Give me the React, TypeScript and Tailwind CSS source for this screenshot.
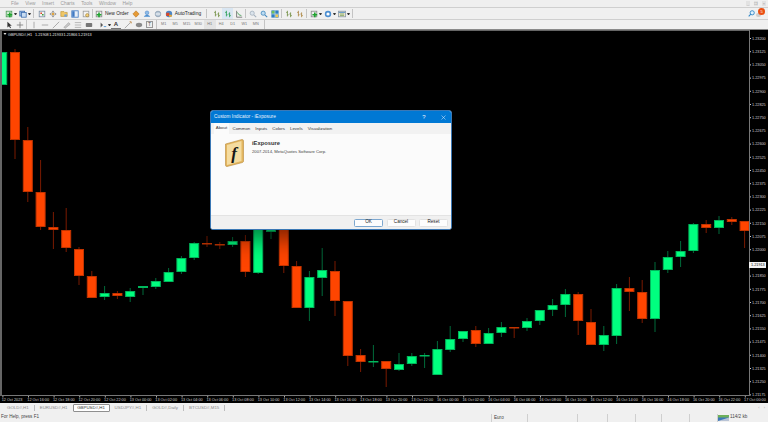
import type { ReactNode } from "react";

type Candle = [number, number, number, number];

// wick top, body top, body bottom, wick bottom per bar, in page pixels
const BARS: Candle[] = [
  [52, 52, 85, 85], [49, 52, 140, 159], [127, 140, 192, 202], [160, 192, 227, 230],
  [212, 227, 230, 249], [208, 230, 248, 252], [247, 249, 276, 285], [271, 276, 298, 298],
  [286, 293, 297, 300], [291, 293, 296, 299], [288, 291, 297, 302], [286, 286, 288, 295],
  [278, 281, 287, 289], [268, 272, 282, 282], [256, 258, 272, 274], [242, 243, 258, 260],
  [236, 243, 244, 247], [242, 244, 245, 249], [237, 241, 245, 247], [235, 241, 272, 277],
  [225, 228, 273, 274], [222, 225, 232, 239], [220, 222, 266, 273], [261, 266, 308, 308],
  [271, 277, 308, 321], [248, 270, 278, 296], [261, 271, 301, 316], [301, 301, 356, 366],
  [349, 355, 362, 372], [345, 361, 362, 367], [361, 361, 369, 387], [353, 364, 370, 371],
  [353, 356, 364, 366], [353, 355, 356, 368], [341, 349, 375, 375], [326, 339, 350, 352],
  [331, 331, 339, 342], [326, 330, 344, 347], [328, 333, 344, 344], [322, 327, 333, 337],
  [327, 327, 328, 338], [318, 321, 328, 331], [310, 310, 321, 325], [299, 305, 310, 316],
  [289, 294, 305, 317], [292, 294, 321, 335], [309, 322, 345, 345], [326, 335, 345, 351],
  [284, 288, 336, 344], [277, 288, 292, 311], [280, 292, 319, 323], [262, 270, 319, 332],
  [251, 257, 270, 273], [241, 251, 257, 267], [223, 224, 251, 253], [220, 224, 228, 233],
  [216, 220, 228, 234], [217, 219, 222, 225], [221, 221, 231, 248],
];

// bars that closed above their open
const UP = new Set([0, 8, 10, 11, 12, 13, 14, 15, 18, 20, 21, 24, 25, 29, 31, 32, 33, 34, 35, 36, 38, 39, 41, 42, 43, 44, 47, 48, 51, 52, 53, 54, 56]);

const TIMES = [
  "12 Oct 2023",
  ...["16", "18", "20", "22"].map((h) => `12 Oct ${h}:00`),
  ...["00", "02", "04", "06", "08", "10", "12", "14", "16", "18", "20", "22"].map((h) => `13 Oct ${h}:00`),
  ...["00", "02", "04", "06", "08", "10", "12", "14", "16", "18", "20", "22"].map((h) => `16 Oct ${h}:00`),
  "17 Oct 00:00",
];

function Chart() {
  const prices = Array.from({ length: 28 }, (_, i) => (1.232 - i * 0.00075).toFixed(5));
  const quotes = ["1.21908", "1.21933", "1.21866", "1.21913"];
  const font = "Liberation Sans, sans-serif";

  return (
    <svg viewBox="0 30 768 373" className="block h-[373px] w-[768px]">
      <rect x="0" y="30" width="768" height="373" fill="#000" />
      <rect x="0" y="30" width="2" height="366" fill="#666" />
      <rect x="0" y="30" width="750" height="1" fill="#666" />

      <svg x="2" y="31" width="747" height="364" viewBox="2 31 747 364">
        {BARS.map(([top, open, close, bottom], i) => {
          const x = 2.2 + 12.8 * i;
          const up = UP.has(i);
          const h = close - open;
          return (
            <g key={i}>
              <line x1={x} x2={x} y1={top} y2={bottom} stroke={up ? "#006b3a" : "#7a1a00"} strokeWidth="1" />
              <rect
                x={x - 4.5}
                y={open + 0.5}
                width="9"
                height={Math.max(h - 1, 0.5)}
                fill={up ? "#00ff7f" : "#ff4500"}
                stroke={up ? "#00b85c" : "#c23400"}
                strokeWidth="1"
              />
            </g>
          );
        })}
      </svg>

      {/* symbol line */}
      <path d="M3.500 33h3l-1.500 2z" fill="#ddd" />
      <text x="8" y="35.600" fontSize="3.800" fill="#e5e5e5" fontFamily={font}>
        GBPUSD#,H1
      </text>
      {quotes.map((q, i) => (
        <text key={q} x={35 + i * 14.3} y="35.600" fontSize="3.800" fill="#e5e5e5" fontFamily={font}>
          {q}
        </text>
      ))}

      {/* price axis, the 1.21925 tick sits under the last price tag */}
      <rect x="749" y="30" width="1" height="366" fill="#777" />
      {prices.map((p, i) =>
        i === 17 ? null : (
          <g key={p}>
            <rect x="750" y={38 + i * 13.2} width="1" height="1" fill="#ccc" />
            <text x="752" y={39.8 + i * 13.2} fontSize="3.800" fill="#cfcfcf" fontFamily={font}>
              {p}
            </text>
          </g>
        ),
      )}
      <rect x="749" y="262" width="17" height="6" fill="#f4f4f4" />
      <text x="751" y="266.400" fontSize="3.800" fill="#111" fontFamily={font}>
        1.21913
      </text>

      {/* time axis */}
      <rect x="2" y="395" width="748" height="1" fill="#777" />
      {TIMES.map((t, i) => (
        <g key={t}>
          <rect x={2.4 + i * 25.6} y="396" width="1" height="1.500" fill="#aaa" />
          <text x={1.7 + i * 25.6} y="400.600" fontSize="3.800" fill="#cfcfcf" fontFamily={font}>
            {t}
          </text>
        </g>
      ))}
    </svg>
  );
}

function Icon({ children, w = "w-[11px]" }: { children: ReactNode; w?: string }) {
  return (
    <span className={`flex h-full shrink-0 items-center justify-center ${w}`}>
      <svg viewBox="0 0 10 10" className="h-[8px] w-[8px]">
        {children}
      </svg>
    </span>
  );
}

function Sep({ tight }: { tight?: boolean }) {
  return <span className={`h-[9px] w-px shrink-0 bg-[#c4c4c4] ${tight ? "mx-px" : "mx-[2px]"}`} />;
}

function Caret() {
  return <span className="h-0 w-[3px] shrink-0 border-x-[1.500px] border-t-[2px] border-x-transparent border-t-[#333]" />;
}

const Plus = ({ x = 5, y = 6 }: { x?: number; y?: number }) => (
  <path d={`M${x - 1} ${y - 3}h2v2h2v2h-2v2h-2v-2h-2v-2h2z`} fill="#1fa32e" />
);

const Doc = ({ fill = "#dfe7ef", stroke = "#7b8da3" }: { fill?: string; stroke?: string }) => (
  <rect x="1.500" y="1.500" width="7" height="7" fill={fill} stroke={stroke} />
);

const Bars = ({ color = "#2f8f4e" }: { color?: string }) => (
  <path d="M3 1v7M1.500 3H3M3 6h1.500M7 3v6M5.500 5H7M7 7h1.500" stroke={color} fill="none" strokeWidth="1" />
);

function MainToolbar() {
  return (
    <div className="flex h-[12px] items-center border-b border-[#cfcfcf] bg-[#f0f0f0] pl-[3px]">
      <Icon><Doc fill="#cfe8cf" stroke="#4c9a57" /><Plus x={6} y={6} /></Icon>
      <Caret />
      <Icon><rect x="1" y="1.500" width="6" height="6" fill="#9fc0e6" stroke="#3f6fb0" /><rect x="3" y="3" width="6" height="6" fill="#c8dcf2" stroke="#3f6fb0" /></Icon>
      <Caret />
      <Sep />
      <Icon><Doc fill="#f2f2f2" /><path d="M3 3h2v2H3z" fill="#d64a2a" /><path d="M5 5h2v2H5z" fill="#3c9a3c" /></Icon>
      <Icon><path d="M5 .5 7 3H3zM5 9.500 3 7h4zM.5 5 3 3v4zM9.500 5 7 7V3z" fill="#8a8a8a" /><circle cx="5" cy="5" r="1.500" fill="#e2a33b" /></Icon>
      <Icon><path d="M1 2h4l1 1h3v5H1z" fill="#f1c766" stroke="#b48a2a" strokeWidth=".7" /><circle cx="7" cy="7" r="1.800" fill="#7aa6d6" /></Icon>
      <Icon><rect x="1" y="1" width="8" height="8" fill="#e6eef8" stroke="#3f79c2" /><rect x="1.500" y="1.500" width="3" height="7" fill="#3f79c2" /></Icon>
      <Icon><Doc fill="#f3f3f3" stroke="#9a9a9a" /><circle cx="6.500" cy="6.500" r="2" fill="#f7d27a" stroke="#8a6a20" strokeWidth=".6" /></Icon>
      <Sep tight />
      <Icon w="w-[10px]"><Doc fill="#ededed" stroke="#888" /><Plus x={5} y={6} /></Icon>
      <span className="ml-[1px] text-[4.900px] whitespace-nowrap text-[#222]">New Order</span>
      <span className="w-[2px]" />
      <Icon><path d="M5 1 9 5 5 9 1 5z" fill="#e59a35" stroke="#a96a18" strokeWidth=".6" /></Icon>
      <Icon><path d="M1 8.500c1-3 7-3 8 0z" fill="#4d8fd1" /><circle cx="5" cy="3.500" r="2.300" fill="#8cbce8" stroke="#3f79c2" strokeWidth=".6" /></Icon>
      <Icon><circle cx="5" cy="5" r="3.500" fill="#b9c9d8" stroke="#6c8298" strokeWidth=".7" /><path d="M2 5h6" stroke="#fff" /></Icon>
      <Icon w="w-[10px]"><circle cx="5" cy="5" r="4" fill="#4c86c6" /><path d="M1.500 3.500h4v4h-4z" fill="#d9482b" /><path d="M5 6h3.500v2.500H5z" fill="#e6a93c" /></Icon>
      <span className="ml-[1px] text-[4.900px] whitespace-nowrap text-[#222]">AutoTrading</span>
      <span className="w-[3px]" />
      <Sep />
      <span className="w-[2px]" />
      <Icon><Bars color="#6b8a3a" /></Icon>
      <span className="flex h-full w-[11px] shrink-0 items-center justify-center bg-[#d9e6f2]">
        <svg viewBox="0 0 10 10" className="h-[8px] w-[8px]"><Bars color="#1f9a4a" /></svg>
      </span>
      <Icon><path d="M2 1v8h7" stroke="#666" fill="none" /><path d="M3 3l2 3 3 1" stroke="#3a9a4a" fill="none" /></Icon>
      <Sep tight />
      <Icon><circle cx="4" cy="4" r="2.600" fill="#dbe4ec" stroke="#a3b0bc" /><path d="M6 6l3 3" stroke="#a3b0bc" strokeWidth="1.300" /></Icon>
      <Icon><circle cx="4" cy="4" r="2.600" fill="#bcdcf2" stroke="#3f86bd" /><path d="M6 6l3 3" stroke="#3f86bd" strokeWidth="1.300" /></Icon>
      <Icon><rect x=".5" y=".5" width="9" height="9" fill="#2f7fc0" /><path d="M1 1h3.500v3.500H1z" fill="#6fc25a" /><path d="M5.500 5.500H9V9H5.500z" fill="#f2c84b" /><path d="M5 .5v9M.5 5h9" stroke="#fff" strokeWidth=".6" /></Icon>
      <Sep tight />
      <Icon><Bars color="#6b8a3a" /></Icon>
      <Icon><Bars color="#a9823a" /></Icon>
      <Sep tight />
      <Icon><Doc fill="#ececec" stroke="#888" /><Plus x={6} y={6} /></Icon>
      <Caret />
      <Icon><circle cx="5" cy="5" r="4" fill="#4d8fd1" /><circle cx="5" cy="5" r="2" fill="#fff" /></Icon>
      <Caret />
      <Icon><rect x=".5" y="1.500" width="9" height="7" fill="#e9e4c9" stroke="#8c9aa8" /><path d="M1 3h8" stroke="#5d93c9" strokeWidth="1.200" /><path d="M2.500 5h5M2.500 7h5" stroke="#7ba35a" /></Icon>
      <Caret />
      <Sep />

      <div className="ml-auto flex h-full items-center gap-[3px] pr-[3px]">
        <svg viewBox="0 0 10 10" className="h-[7px] w-[7px]">
          <circle cx="6" cy="4" r="3" fill="#dff0fb" stroke="#2f87c8" strokeWidth="1.300" />
          <path d="M4 6 1 9" stroke="#2f87c8" strokeWidth="1.500" />
        </svg>
        <span className="relative h-[7px] w-[7px]">
          <span className="absolute -left-[2px] top-[3px] h-[4px] w-[5px] rounded-full bg-[#cfcfcf]" />
          <span className="absolute left-0 -top-[2px] flex h-[7px] w-[7px] items-center justify-center rounded-full bg-[#ea4f12] text-[4px] text-white">5</span>
        </span>
      </div>
    </div>
  );
}

function DrawingToolbar() {
  const periods = ["M1", "M5", "M15", "M30", "H1", "H4", "D1", "W1", "MN"];

  return (
    <div className="flex h-[10px] items-center border-b border-[#8a8a8a] bg-[#f0f0f0] pl-[3px]">
      <Icon><path d="M3 1v7l2-1.500L6.500 9l1-.500L6 6h2.500z" fill="#333" /></Icon>
      <Icon><path d="M5 1v8M1 5h8" stroke="#777" /></Icon>
      <Sep tight />
      <Icon><path d="M5 1v8" stroke="#999" /></Icon>
      <Icon><path d="M1 5h8" stroke="#999" /></Icon>
      <Icon><path d="M1 9 9 1" stroke="#999" /></Icon>
      <Icon><path d="M1 8 7 2l2 2-6 5z" fill="#c8c8c8" stroke="#888" strokeWidth=".5" /></Icon>
      <Icon><path d="M1 2h8M1 5h8M1 8h8" stroke="#aaa" /></Icon>
      <Icon><rect x="1" y="2.500" width="8" height="5" rx="1" fill="#777" /></Icon>
      <span className="w-[3px]" />
      <Icon><path d="M2 2l3 3-3 3" fill="#555" /><path d="M6 7h3" stroke="#3a8ad0" /></Icon>
      <Caret />
      <span className="flex h-full w-[10px] shrink-0 items-center justify-center border-b border-[#777] text-[6px] font-bold text-[#333]">A</span>
      <span className="w-[1px]" />
      <Icon><path d="M1 9 8 2" stroke="#999" /><path d="M7 1h2v2" stroke="#bb7a2a" fill="none" /></Icon>
      <Icon><ellipse cx="5" cy="5" rx="4" ry="2.700" fill="#8a8a8a" /></Icon>
      <span className="flex h-full w-[11px] shrink-0 items-center justify-center">
        <span className="flex h-[7px] w-[7px] items-center justify-center border border-[#999] text-[5px] text-[#555]">T</span>
      </span>
      <Sep tight />
      {periods.map((p) => (
        <span
          key={p}
          className={`flex h-full w-[11.500px] shrink-0 items-center justify-center text-[3.800px] text-[#777] ${p === "H1" ? "bg-[#e3e3e3]" : ""}`}
        >
          {p}
        </span>
      ))}
      <Sep />
    </div>
  );
}

function Dialog() {
  const tabs = ["About", "Common", "Inputs", "Colors", "Levels", "Visualization"];

  return (
    <div className="absolute top-[110px] left-[210px] flex h-[120px] w-[242px] flex-col overflow-hidden rounded-[3px] border border-[#3b78b5] bg-[#f9f9f9] shadow-[0_0_24px_8px_rgba(0,0,0,0.55)]">
      <div className="flex h-[12px] shrink-0 items-center bg-[#0078d4] pl-[3px] text-[4.800px] text-[#e8f3fc]">
        <span>Custom Indicator - iExposure</span>
        <span className="ml-auto mr-[15px] text-[6px]">?</span>
        <svg viewBox="0 0 10 10" className="mr-[5.500px] h-[5px] w-[5px]">
          <path d="M1 1l8 8M9 1 1 9" stroke="#e8f3fc" strokeWidth="1" />
        </svg>
      </div>

      <div className="flex h-[11px] shrink-0 items-end gap-[2px] bg-[#f2f2f2] pl-[3px] text-[4.400px] text-[#333]">
        {tabs.map((t, i) => (
          <span
            key={t}
            className={i === 0 ? "flex h-[11px] w-[15px] items-center justify-center bg-[#fbfbfb]" : "flex h-[10px] items-center px-[1.500px]"}
          >
            {t}
          </span>
        ))}
      </div>

      <div className="flex flex-1 gap-[8px] bg-[#fbfbfb] pl-[13px] pt-[5px]">
        <svg viewBox="0 0 20 28" className="h-[28px] w-[20px] shrink-0">
          <path d="M1.500 5 18 .5q1.500 0 1.500 1.500v20q0 1-1 1.500L3 27.500q-1.500 0-1.500-1.500z" fill="#e3b65f" stroke="#b98a3a" strokeWidth=".6" />
          <path d="M3 6 17.500 2v20L3 26z" fill="#f5dca0" />
          <text x="10" y="20" textAnchor="middle" fontSize="17" fontStyle="italic" fontWeight="bold" fill="#161616" fontFamily="Liberation Serif, serif">
            f
          </text>
        </svg>
        <div>
          <div className="text-[5.800px] leading-[8px] font-bold text-[#333]">iExposure</div>
          <div className="mt-[1px] text-[4.200px] leading-[7px] text-[#444]">2007-2014, MetaQuotes Software Corp.</div>
        </div>
      </div>

      <div className="flex h-[14px] shrink-0 items-center justify-end gap-[3.500px] border-t border-[#e3e3e3] bg-[#f0f0f0] pr-[3px] text-[4.600px] text-[#222]">
        <span className="flex h-[8px] w-[29px] items-center justify-center rounded-[1.500px] border border-[#7da7cf] bg-[#fdfdfd]">OK</span>
        <span className="flex h-[8px] w-[29px] items-center justify-center rounded-[1.500px] border border-[#e2e2e2] bg-[#fdfdfd]">Cancel</span>
        <span className="flex h-[8px] w-[29px] items-center justify-center rounded-[1.500px] border border-[#e2e2e2] bg-[#fdfdfd]">Reset</span>
      </div>
    </div>
  );
}

function ChartTabs() {
  const tabs = ["GOLD#,H1", "EURUSD#,H1", "GBPUSD#,H1", "USDJPY#,H1", "GOLD#,Daily", "BTCUSD#,M15"];

  return (
    <div className="flex h-[10px] items-center bg-[#f0f0f0] pl-[2px] text-[4.400px] text-[#8a8a8a]">
      {tabs.map((t) =>
        t === "GBPUSD#,H1" ? (
          <span key={t} className="flex h-[8px] w-[37px] shrink-0 items-center justify-center rounded-[1px] border border-[#8f8f8f] bg-white text-[#333]">
            {t}
          </span>
        ) : (
          <span key={t} className={`flex h-[6px] items-center px-[5px] ${t === "EURUSD#,H1" ? "" : "border-r border-[#bdbdbd]"}`}>
            {t}
          </span>
        ),
      )}
      <span className="ml-auto flex gap-[4px] pr-[3px] text-[4px] text-[#aaa]">
        <span>‹</span>
        <span>›</span>
      </span>
    </div>
  );
}

function StatusBar() {
  const cells = ["w-[36px]", "w-[50px]", "w-[30px]", "w-[28px]", "w-[26px]", "w-[28px]", "w-[28px]"];

  return (
    <div className="flex h-[9px] items-center bg-[#f0f0f0] text-[4.600px] text-[#444]">
      <span className="ml-[1px] w-[490px] shrink-0">For Help, press F1</span>
      {cells.map((w, i) => (
        <span key={w + i} className={`h-[8px] shrink-0 border-l border-[#cfcfcf] pl-[2px] leading-[8px] ${w}`}>
          {i === 0 ? "Euro" : ""}
        </span>
      ))}
      <span className="flex h-[8px] items-center gap-[1px] border-l border-[#cfcfcf]">
        <svg viewBox="0 0 11 6" className="h-[6px] w-[11px]">
          <rect width="11" height="6" fill="#3c78b8" />
          <rect width="11" height="2.500" fill="#6fb05a" />
          <path d="M0 6 11 2.500V6z" fill="#b9c4d6" />
        </svg>
        <span className="whitespace-nowrap">114/2 kb</span>
      </span>
    </div>
  );
}

export default function App() {
  const menu = ["File", "View", "Insert", "Charts", "Tools", "Window", "Help"];

  return (
    <div className="relative h-[422px] w-[768px] overflow-hidden bg-[#f0f0f0] font-['Liberation_Sans',sans-serif]">
      {/* menu bar, cut by the window top */}
      <div className="flex h-[8px] items-center gap-[6.500px] border-b border-[#cfcfcf] bg-[#efefef] pl-[11px] text-[4.800px] text-[#9a9a9a]">
        {menu.map((m) => (
          <span key={m}>{m}</span>
        ))}
        <span className="ml-auto flex gap-[4px] pr-[2px] text-[4px] text-[#9a9a9a]">
          <span className="flex h-[5px] w-[4px] items-center justify-center bg-[#e2e2e2]">_</span>
          <span className="flex h-[5px] w-[4px] items-center justify-center bg-[#e2e2e2]">❐</span>
          <span className="flex h-[5px] w-[4px] items-center justify-center bg-[#e2e2e2]">×</span>
        </span>
      </div>
      <MainToolbar />
      <DrawingToolbar />
      <Chart />
      <ChartTabs />
      <StatusBar />
      <Dialog />
    </div>
  );
}
